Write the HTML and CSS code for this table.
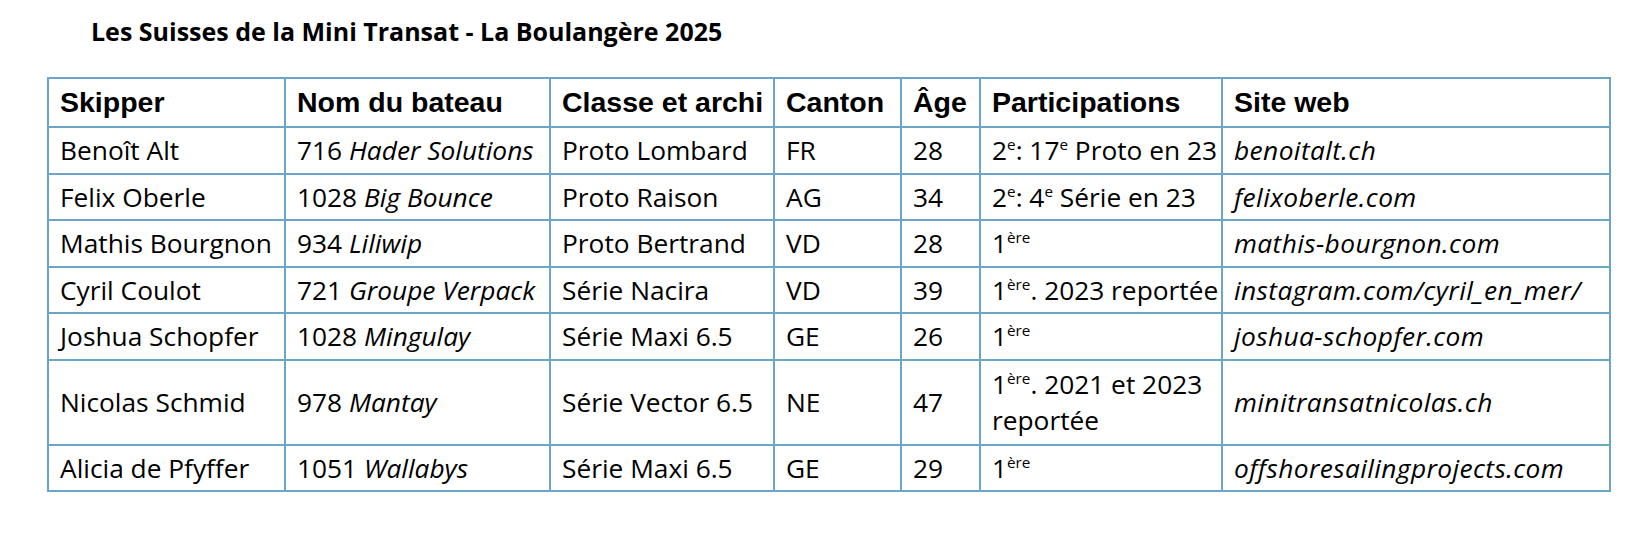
FILE: index.html
```html
<!DOCTYPE html>
<html lang="fr">
<head>
<meta charset="utf-8">
<title>Les Suisses de la Mini Transat - La Boulangère 2025</title>
<link rel="stylesheet" href="styles.css">
</head>
<body>
<h1 class="title">Les Suisses de la Mini Transat - La Boulangère 2025</h1>
<table class="skippers">
  <colgroup>
    <col class="c-skipper">
    <col class="c-bateau">
    <col class="c-classe">
    <col class="c-canton">
    <col class="c-age">
    <col class="c-part">
    <col class="c-web">
  </colgroup>
  <thead>
    <tr>
      <th>Skipper</th>
      <th>Nom du bateau</th>
      <th>Classe et archi</th>
      <th>Canton</th>
      <th>Âge</th>
      <th>Participations</th>
      <th>Site web</th>
    </tr>
  </thead>
  <tbody>
    <tr>
      <td>Benoît Alt</td>
      <td>716 <em>Hader Solutions</em></td>
      <td>Proto Lombard</td>
      <td>FR</td>
      <td>28</td>
      <td>2<sup>e</sup>: 17<sup>e</sup> Proto en 23</td>
      <td class="web"><em>benoitalt.ch</em></td>
    </tr>
    <tr>
      <td>Felix Oberle</td>
      <td>1028 <em>Big Bounce</em></td>
      <td>Proto Raison</td>
      <td>AG</td>
      <td>34</td>
      <td>2<sup>e</sup>: 4<sup>e</sup> Série en 23</td>
      <td class="web"><em>felixoberle.com</em></td>
    </tr>
    <tr>
      <td>Mathis Bourgnon</td>
      <td>934 <em>Liliwip</em></td>
      <td>Proto Bertrand</td>
      <td>VD</td>
      <td>28</td>
      <td>1<sup>ère</sup></td>
      <td class="web"><em>mathis-bourgnon.com</em></td>
    </tr>
    <tr>
      <td>Cyril Coulot</td>
      <td>721 <em>Groupe Verpack</em></td>
      <td>Série Nacira</td>
      <td>VD</td>
      <td>39</td>
      <td>1<sup>ère</sup>. 2023 reportée</td>
      <td class="web"><em>instagram.com/cyril_en_mer/</em></td>
    </tr>
    <tr>
      <td>Joshua Schopfer</td>
      <td>1028 <em>Mingulay</em></td>
      <td>Série Maxi 6.5</td>
      <td>GE</td>
      <td>26</td>
      <td>1<sup>ère</sup></td>
      <td class="web"><em>joshua-schopfer.com</em></td>
    </tr>
    <tr>
      <td>Nicolas Schmid</td>
      <td>978 <em>Mantay</em></td>
      <td>Série Vector 6.5</td>
      <td>NE</td>
      <td>47</td>
      <td class="two-line">1<sup>ère</sup>. 2021 et 2023<br>reportée</td>
      <td class="web"><em>minitransatnicolas.ch</em></td>
    </tr>
    <tr>
      <td>Alicia de Pfyffer</td>
      <td>1051 <em>Wallabys</em></td>
      <td>Série Maxi 6.5</td>
      <td>GE</td>
      <td>29</td>
      <td>1<sup>ère</sup></td>
      <td class="web"><em>offshoresailingprojects.com</em></td>
    </tr>
  </tbody>
</table>
</body>
</html>
```
FILE: styles.css
```css
html, body {
  margin: 0;
  padding: 0;
  background: #ffffff;
  color: #000000;
}

body {
  font-family: "Open Sans", "Noto Sans", sans-serif;
}

.title {
  margin: 14px 0 0 91px;
  font-family: "Open Sans", "Noto Sans", sans-serif;
  font-weight: 700;
  font-size: 25px;
  line-height: 34px;
  color: #000;
}

.skippers {
  margin: 29px 0 0 47px;
  border-collapse: collapse;
  table-layout: fixed;
  width: 1562px;
}

.c-skipper { width: 237px; }
.c-bateau { width: 265px; }
.c-classe { width: 224px; }
.c-canton { width: 127px; }
.c-age { width: 79px; }
.c-part { width: 242px; }
.c-web { width: 388px; }

.skippers th,
.skippers td {
  border: 2px solid #6ba6c7;
  text-align: left;
  vertical-align: middle;
  white-space: nowrap;
  padding: 5px 4px 5px 11px;
}

.skippers th {
  font-family: "Liberation Sans", Arial, sans-serif;
  font-weight: 700;
  font-size: 28.5px;
  line-height: 37px;
}

.skippers td {
  font-family: "Open Sans", "Noto Sans", sans-serif;
  font-weight: 400;
  font-size: 26.3px;
  line-height: 34.5px;
}

.skippers td.two-line {
  line-height: 36.5px;
}

.skippers em {
  font-style: italic;
}

.skippers td.web em {
  letter-spacing: 0.4px;
}

.skippers sup {
  font-size: 0.58em;
  line-height: 0;
  vertical-align: 0.64em;
}
```
